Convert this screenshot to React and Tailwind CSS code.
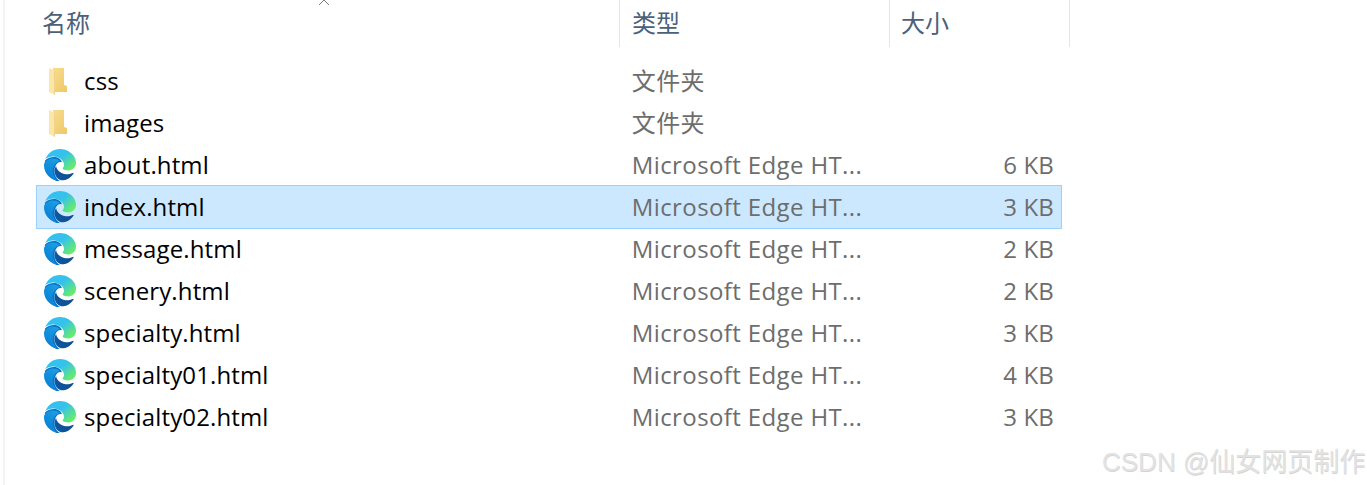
import React from 'react';

const files = [
  { name: 'css', type: '文件夹', folder: true },
  { name: 'images', type: '文件夹', folder: true },
  { name: 'about.html', type: 'Microsoft Edge HT...', size: '6 KB' },
  { name: 'index.html', type: 'Microsoft Edge HT...', size: '3 KB', selected: true },
  { name: 'message.html', type: 'Microsoft Edge HT...', size: '2 KB' },
  { name: 'scenery.html', type: 'Microsoft Edge HT...', size: '2 KB' },
  { name: 'specialty.html', type: 'Microsoft Edge HT...', size: '3 KB' },
  { name: 'specialty01.html', type: 'Microsoft Edge HT...', size: '4 KB' },
  { name: 'specialty02.html', type: 'Microsoft Edge HT...', size: '3 KB' },
];

function FolderIcon() {
  return (
    <svg width="18" height="27" viewBox="0 0 18 27" className="ml-[5px] mr-[17px] shrink-0">
      <defs>
        <linearGradient id="folderBack" x1="0" y1="0" x2="1" y2="1">
          <stop offset="0" stopColor="#f8dd8e" />
          <stop offset="1" stopColor="#efc766" />
        </linearGradient>
      </defs>
      <path d="M4 0H15V17L18 18V24H4Z" fill="url(#folderBack)" />
      <path d="M0 0L6 3V27L0 24Z" fill="#fbe6a6" />
      <path d="M6 3V27L5.2 26.6V3Z" fill="#e9d08a" />
    </svg>
  );
}

function EdgeIcon({ id }) {
  return (
    <svg width="32" height="32" viewBox="0 0 24 24" className="shrink-0 mr-[8px]">
      <defs>
        <linearGradient id={`edgeTop${id}`} x1="0.15" y1="0.1" x2="0.95" y2="0.75">
          <stop offset="0" stopColor="#35c1f1" />
          <stop offset="0.45" stopColor="#34c1ed" />
          <stop offset="1" stopColor="#66eb6e" />
        </linearGradient>
        <linearGradient id={`edgeLeft${id}`} x1="0.8" y1="0.1" x2="0.3" y2="0.9">
          <stop offset="0" stopColor="#1b9de2" />
          <stop offset="1" stopColor="#0680d7" />
        </linearGradient>
        <linearGradient id={`edgeDark${id}`} x1="0" y1="0.6" x2="1" y2="0.3">
          <stop offset="0" stopColor="#0c59a4" />
          <stop offset="1" stopColor="#114a8b" />
        </linearGradient>
      </defs>
      {/* fills the thin gaps of the glyph so the swirl reads as one shape at this size */}
      <path
        d="M0.5 9C3 5.8 9 4.8 12 7.5C13 8.5 13.3 9.2 13.3 10C11.5 9.4 10 10.5 9 12C7.5 14.5 7.6 18 8.5 20C9.2 21.5 10.2 23 12 24L9 24L4 15Z"
        fill="#0f72c6"
      />
      <path
        d="M6.36 16.59q0 1.1.27 2.15.27 1.06.78 2.03.51.96 1.24 1.77.74.82 1.66 1.4-1.47-.2-2.8-.74-1.33-.55-2.48-1.37-1.15-.83-2.08-1.9-.92-1.07-1.58-2.33T.36 14.94Q0 13.54 0 12.06q0-.81.32-1.49.31-.68.83-1.23.53-.55 1.2-.96.66-.4 1.35-.66.74-.27 1.5-.39.78-.12 1.55-.12.7 0 1.42.1.72.12 1.4.35.68.23 1.32.57.63.35 1.16.83-.35 0-.7.07-.33.07-.65.23v-.02q-.63.28-1.2.74-.57.46-1.05 1.04-.48.58-.87 1.26-.38.67-.65 1.39-.27.71-.42 1.44-.15.72-.15 1.38z"
        fill={`url(#edgeLeft${id})`}
      />
      <path
        d="M21.86 17.86q.14 0 .25.12.1.13.1.25t-.11.33l-.32.46-.43.53-.44.5q-.21.25-.38.42l-.22.23q-.58.53-1.34 1.04-.76.51-1.6.91-.86.4-1.74.64t-1.67.24q-.9 0-1.69-.28-.8-.28-1.48-.78-.68-.5-1.22-1.17-.53-.66-.92-1.44-.38-.77-.58-1.6-.2-.83-.2-1.67 0-1 .32-1.96.33-.97.87-1.8.14.95.55 1.77.41.82 1.02 1.5.6.68 1.38 1.21.78.54 1.64.9.86.36 1.77.56.92.2 1.8.2 1.12 0 2.18-.24 1.06-.23 2.06-.72l.2-.1.2-.05z"
        fill={`url(#edgeDark${id})`}
      />
      <path
        d="M11.96.06q1.7 0 3.33.39 1.63.38 3.07 1.15 1.43.77 2.62 1.93 1.18 1.16 1.98 2.7.49.94.76 1.96.28 1 .28 2.08 0 .89-.23 1.7-.24.8-.69 1.48-.45.68-1.1 1.22-.64.53-1.45.88-.54.24-1.11.36-.58.13-1.16.13-.42 0-.97-.03-.54-.03-1.1-.12-.55-.09-1.05-.28-.5-.19-.84-.5-.12-.09-.23-.24-.1-.16-.1-.33 0-.15.16-.35.16-.2.35-.5.2-.28.36-.68.16-.4.16-.95 0-1.06-.4-1.96-.4-.91-1.06-1.64-.66-.74-1.52-1.28-.86-.55-1.79-.89-.84-.3-1.72-.44-.87-.14-1.76-.14-1.55 0-3.06.45T.94 7.55q.71-1.74 1.81-3.13 1.1-1.38 2.52-2.35Q6.68 1.1 8.37.58q1.7-.52 3.58-.52Z"
        fill={`url(#edgeTop${id})`}
      />
    </svg>
  );
}

function FileRow({ file }) {
  const rowClass = file.selected
    ? 'bg-[#cce8ff] border-[#99d1ff]'
    : 'bg-transparent border-transparent';
  return (
    <div className={`flex items-center h-[44px] -my-px border px-[7px] ${rowClass}`}>
      <div className="flex items-center w-[589px] text-black tracking-[0.13px]">
        {file.folder ? <FolderIcon /> : <EdgeIcon id={file.name.replace('.', '')} />}
        <span>{file.name}</span>
      </div>
      <div className="w-[270px] text-[#6d6d6d] tracking-[0.38px]">{file.type}</div>
      <div className="w-[153px] text-right text-[#6d6d6d] tracking-[0.13px]">{file.size}</div>
    </div>
  );
}

export default function App() {
  return (
    <div className="relative w-[1367px] h-[485px] overflow-hidden bg-white font-['Open_Sans','Noto_Sans_CJK_SC',sans-serif] text-[24px] leading-[32px]">
      <div className="ml-[3px] h-full border-l-2 border-[#f3f3f3] pl-[30px]">
        <div className="flex h-[47px] text-[#4c607a]">
          <div className="w-[585px] pl-[7px] pt-[7px] border-r border-[#e5e5e5]">名称</div>
          <div className="w-[270px] pl-[12px] pt-[7px] border-r border-[#e5e5e5]">类型</div>
          <div className="w-[180px] pl-[11px] pt-[7px] border-r border-[#e5e5e5]">大小</div>
        </div>
        <div className="w-[1026px] ml-px mt-[13px] flex flex-col">
          {files.map((file) => (
            <FileRow key={file.name} file={file} />
          ))}
        </div>
      </div>
      <svg width="12" height="6" viewBox="0 0 12 6" className="absolute left-[318px] top-0">
        <path d="M1 5L6 0L11 5" fill="none" stroke="#7a7a7a" strokeWidth="1" />
      </svg>
      <div className="absolute left-[1102px] top-[445px] text-[26px] leading-[34px] whitespace-nowrap font-['Liberation_Sans','Noto_Sans_CJK_SC',sans-serif] text-[#e2e2e2] [text-shadow:0.5px_0.5px_0.5px_#d4d4d4]">
        CSDN @仙女网页制作
      </div>
    </div>
  );
}
